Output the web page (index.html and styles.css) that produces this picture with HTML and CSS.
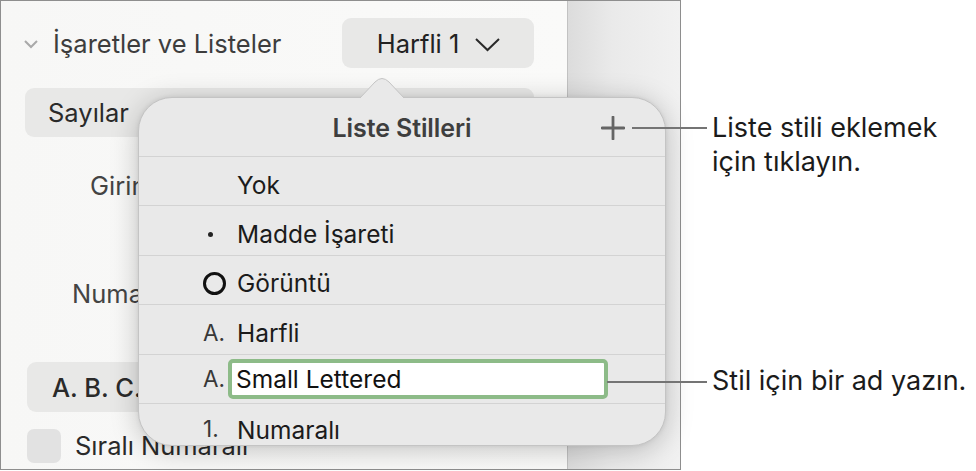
FILE: index.html
```html
<!DOCTYPE html>
<html lang="tr">
<head>
  <meta charset="UTF-8">
  <title>Liste Stilleri</title>
  <link rel="stylesheet" href="styles.css">
</head>
<body>
  <div class="page">
    <div class="shot">
      <div class="sidebar">
        <div class="section-head">
          <svg class="disclosure" width="16" height="10" viewBox="0 0 16 10"><polyline points="2,2 8,8 14,2" fill="none" stroke="#a9a9a9" stroke-width="2"/></svg>
          <span class="section-title">İşaretler ve Listeler</span>
          <div class="style-btn">
            <span>Harfli 1</span>
            <svg width="27" height="15" viewBox="0 0 27 15"><polyline points="2,2 13.5,13 25,2" fill="none" stroke="#2a2a2a" stroke-width="2"/></svg>
          </div>
        </div>
        <div class="pill pill-type">Sayılar</div>
        <div class="label label-indent">Girintiler</div>
        <div class="label label-num">Numara</div>
        <div class="pill pill-abc">A. B. C.</div>
        <div class="check-row">
          <div class="checkbox"></div>
          <span>Sıralı Numaralı</span>
        </div>
      </div>
      <div class="gutter"></div>
    </div>

    <div class="popover">
      <svg class="arrow" width="44" height="24" viewBox="0 0 44 24"><path d="M0 23 L15 7 Q22 0 29 7 L44 23" fill="#e9e9e9" stroke="#c4c4c4" stroke-width="1"/></svg>
      <div class="pop-head">
        <span class="pop-title">Liste Stilleri</span>
        <svg class="plus" width="24" height="24" viewBox="0 0 24 24"><path d="M12 1 V23 M1 12 H23" stroke="#656565" stroke-width="2.8" stroke-linecap="round"/></svg>
      </div>
      <div class="row"><span class="marker"></span><span class="name">Yok</span></div>
      <div class="row"><span class="marker"><i class="dot"></i></span><span class="name">Madde İşareti</span></div>
      <div class="row"><span class="marker"><i class="ring"></i></span><span class="name">Görüntü</span></div>
      <div class="row"><span class="marker">A.</span><span class="name">Harfli</span></div>
      <div class="row row-edit"><span class="marker">A.</span><span class="edit">Small Lettered</span></div>
      <div class="row"><span class="marker">1.</span><span class="name">Numaralı</span></div>
    </div>

    <div class="callout callout-add">
      <div class="lead"></div>
      <div class="note">Liste stili eklemek<br>için tıklayın.</div>
    </div>
    <div class="callout callout-name">
      <div class="lead"></div>
      <div class="note">Stil için bir ad yazın.</div>
    </div>
  </div>
</body>
</html>
```

FILE: styles.css
```css
* {margin: 0; padding: 0; box-sizing: border-box;}
body {background: #fff; font-family: Inter, "Open Sans", sans-serif; color: #1d1d1d;}
.page {position: relative; width: 976px; height: 471px;}

.shot {width: 681px; height: 470px; border: 1px solid #8e8e8e; display: flex; overflow: hidden;}
.sidebar {width: 567px; background: linear-gradient(90deg, #f7f7f6, #fafaf9); border-right: 1px solid #c2c2c2; display: flex; flex-direction: column;}
.gutter {flex: 1; background: linear-gradient(90deg, #dcdcdc, #eaeaea 40%, #f1f1f1);}

.section-head {margin-top: 17px; height: 50px; display: flex; align-items: center; padding-left: 22px; padding-right: 33px;}
.disclosure {margin-top: 2px;}
.section-title {margin-left: 14px; font-size: 25.5px; color: #3d3d3d; flex: 1;}
.style-btn {width: 192px; height: 50px; background: #e8e8e7; border-radius: 9px; display: flex; align-items: center; justify-content: center; gap: 15px; font-size: 25.5px; color: #222; padding-left: 2px;}
.style-btn svg {margin-top: 2px;}

.pill {margin-left: 24px; width: 509px; background: #e8e8e7; border-radius: 9px; display: flex; align-items: center; font-size: 25.5px; color: #2a2a2a;}
.pill-type {margin-top: 20px; height: 49px; padding-left: 23px;}
.label {height: 48px; display: flex; align-items: center; font-size: 25.5px; color: #444;}
.label-indent {margin-top: 24px; padding-left: 89px;}
.label-num {margin-top: 60px; padding-left: 71px;}
.pill-abc {margin-top: 45px; height: 50px; padding-left: 25px; margin-left: 26px; font-weight: 500;}
.check-row {margin-top: 17px; height: 33px; display: flex; align-items: center; padding-left: 26px; gap: 14px; font-size: 25.5px; color: #2a2a2a;}
.checkbox {width: 34px; height: 34px; border-radius: 7px; background: #e2e2e2; flex: none;}

.popover {position: absolute; left: 138px; top: 97px; width: 528px; height: 349px; background: #e9e9e9; border: 1px solid #c4c4c4; border-radius: 34px; box-shadow: 0 4px 28px rgba(0,0,0,0.22), 0 0 4px rgba(0,0,0,0.08);}
.arrow {position: absolute; left: 221px; top: -23px;}
.pop-head {height: 59px; display: flex; align-items: center; justify-content: center; position: relative; border-bottom: 1px solid #d3d3d3;}
.pop-title {font-size: 25px; font-weight: 600; color: #3e3e3e; margin-top: 2px; letter-spacing: -0.1px;}
.plus {position: absolute; right: 40px; top: 18px;}

.row {height: 49.4px; border-bottom: 1px solid #d3d3d3; display: flex; align-items: center; padding-left: 61px; padding-top: 7px; font-size: 24.5px; color: #1b1b1b;}
.row-edit {padding-top: 0;}
.row:last-child {border-bottom: none; height: 41px; overflow: hidden; align-items: flex-start; padding-top: 11px;}
.marker {width: 37px; display: flex; align-items: center; color: #383838; font-size: 22.5px; padding-left: 3px;}
.dot {display: block; width: 5px; height: 5px; border-radius: 50%; background: #222; margin-left: 5px;}
.ring {display: block; width: 23px; height: 23px; border-radius: 50%; border: 3.5px solid #111; margin-left: 0;}
.edit {margin-left: -9px; width: 380px; height: 40px; border: 4px solid #8dbb88; border-radius: 5px; background: #fff; display: flex; align-items: center; padding-left: 4px; color: #111;}

.callout {position: absolute; display: flex; align-items: flex-start;}
.lead {height: 2px; background: #747474; flex: none;}
.note {font-size: 27px; line-height: 34px; color: #1b1b1b; margin-left: 5px; white-space: nowrap;}
.callout-add {left: 632px; top: 111px;}
.callout-add .lead {width: 75px; margin-top: 16px;}
.callout-name {left: 607px; top: 364px;}
.callout-name .lead {width: 100px; margin-top: 17px;}
```
